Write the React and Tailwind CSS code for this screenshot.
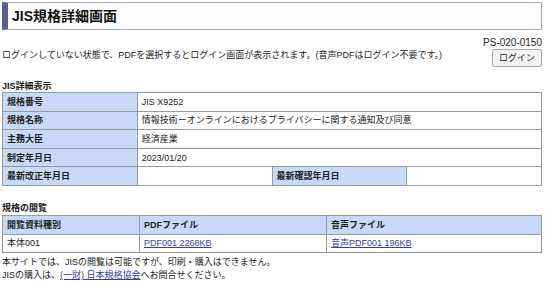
import React from 'react';

const font = "font-['Liberation_Sans','Noto_Sans_CJK_JP',sans-serif]";

const Label = ({ children, className = '' }) => (
  <div className={`bg-[#c8d8f8] border-r border-b border-[#9a9a9a] pl-[4px] h-[18.6px] flex items-center font-bold ${className}`}>
    {children}
  </div>
);

const Value = ({ children, className = '' }) => (
  <div className={`bg-white border-r border-b border-[#9a9a9a] pl-[4px] h-[18.6px] flex items-center ${className}`}>
    {children}
  </div>
);

export default function App() {
  const rows = [
    ['規格番号', 'JIS X9252'],
    ['規格名称', '情報技術ーオンラインにおけるプライバシーに関する通知及び同意'],
    ['主務大臣', '経済産業'],
    ['制定年月日', '2023/01/20'],
  ];

  return (
    <div className={`w-[546px] h-[284px] overflow-hidden bg-white text-[#222] text-[9px] leading-[12px] px-[2px] pt-[2px] ${font}`}>
      {/* Title */}
      <div className="w-[540px] h-[28px] border border-[#a6a6d0] border-l-[6px] border-l-[#5c5c98] pl-[4px] flex items-center">
        <h1 className="text-[14px] font-bold text-[#111]">JIS規格詳細画面</h1>
      </div>

      {/* Notice + login */}
      <div className="w-[540px] flex justify-between items-end mt-[7px]">
        <p className="pb-[6px]">ログインしていない状態で、PDFを選択するとログイン画面が表示されます。(音声PDFはログイン不要です。)</p>
        <div className="flex flex-col items-end">
          <span className="text-[10px]">PS-020-0150</span>
          <button className="h-[18px] px-[6px] border border-[#aaa] rounded-[2px] bg-[#f3f3f3] text-[9px] leading-[12px]">
            ログイン
          </button>
        </div>
      </div>

      {/* Detail table */}
      <h2 className="font-bold mt-[13px]">JIS詳細表示</h2>
      <div className="w-[540px] grid grid-cols-4 border-t border-l border-[#9a9a9a]">
        {rows.map(([k, v]) => (
          <React.Fragment key={k}>
            <Label>{k}</Label>
            <Value className="col-span-3">{v}</Value>
          </React.Fragment>
        ))}
        <Label>最新改正年月日</Label>
        <Value></Value>
        <Label>最新確認年月日</Label>
        <Value></Value>
      </div>

      {/* Viewing table */}
      <h2 className="font-bold mt-[16px] mb-[1px]">規格の閲覧</h2>
      <div className="w-[540px] grid grid-cols-[137px_187px_1fr] border-t border-l border-[#9a9a9a]">
        <Label>閲覧資料種別</Label>
        <Label>PDFファイル</Label>
        <Label>音声ファイル</Label>
        <Value>本体001</Value>
        <Value>
          <a href="#" className="text-[#3a3aa8] underline">PDF001 2268KB</a>
        </Value>
        <Value>
          <a href="#" className="text-[#3a3aa8] underline">音声PDF001 196KB</a>
        </Value>
      </div>

      {/* Footer */}
      <div className="mt-[3px] leading-[13px]">
        <p>本サイトでは、JISの閲覧は可能ですが、印刷・購入はできません。</p>
        <p>
          JISの購入は、
          <a href="#" className="text-[#3a3aa8] underline">(一財) 日本規格協会</a>
          へお問合せください。
        </p>
      </div>
    </div>
  );
}
